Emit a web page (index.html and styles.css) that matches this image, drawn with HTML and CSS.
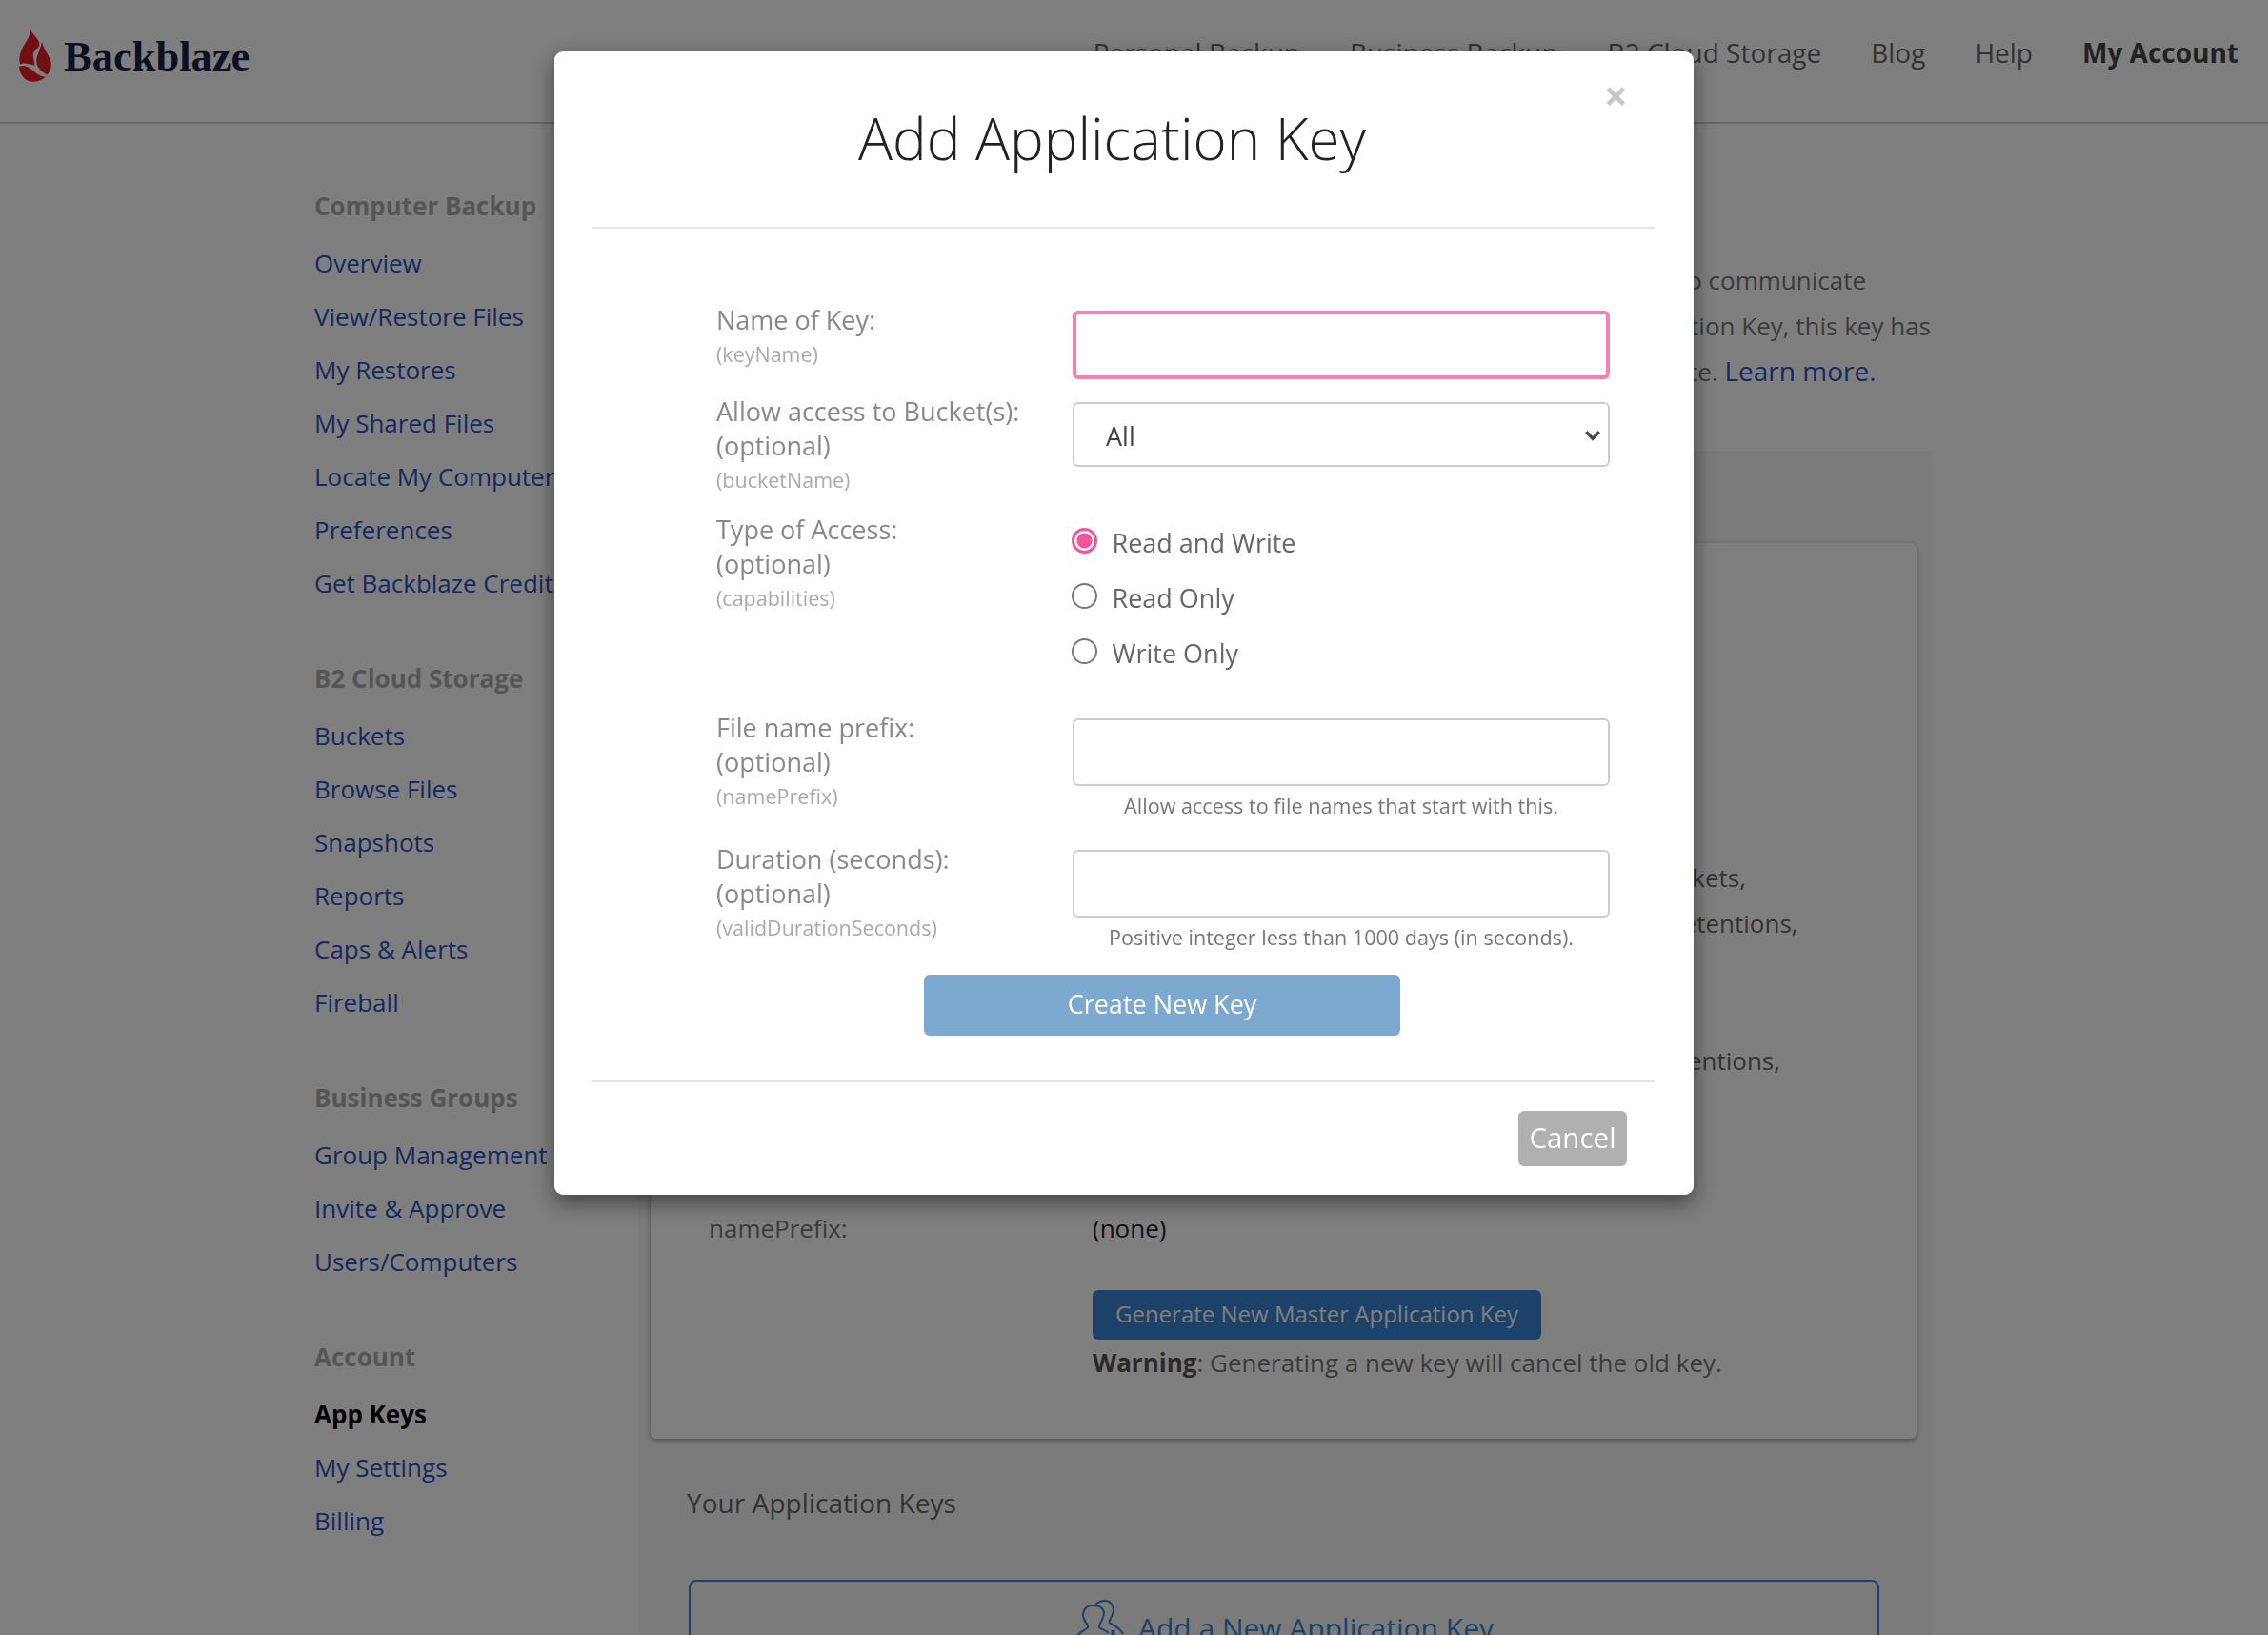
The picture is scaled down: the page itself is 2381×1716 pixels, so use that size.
FILE: index.html
```html
<!DOCTYPE html>
<html lang="en">
<head>
<meta charset="utf-8">
<title>App Keys</title>
<link rel="stylesheet" href="styles.css">
</head>
<body>
<header class="topbar">
  <a class="logo" href="#">
    <svg class="flame" viewBox="0 0 102 173" aria-hidden="true">
      <path d="M35 3C38 22 60 32 64 52C66 66 50 70 45 84C42 96 50 108 49 122C34 116 16 112 3 117C-3 96 6 72 18 54C27 40 37 24 35 3Z"/>
      <path d="M72 45C74 66 92 84 100 108C104 126 98 142 88 151C74 143 58 132 55 112C53 92 68 72 72 45Z"/>
      <path d="M0 124C14 119 30 126 42 136C52 146 66 156 84 158C72 168 58 173 44 173C20 173 2 152 0 124Z"/>
    </svg>
    <span class="logo-text">Backblaze</span>
  </a>
  <nav class="topnav">
    <a href="#">Personal Backup</a>
    <a href="#">Business Backup</a>
    <a href="#">B2 Cloud Storage</a>
    <a href="#">Blog</a>
    <a href="#">Help</a>
    <a href="#" class="strong">My Account</a>
  </nav>
</header>

<div class="layout">
  <aside class="sidebar">
    <section class="side-group">
      <h3>Computer Backup</h3>
      <a href="#">Overview</a>
      <a href="#">View/Restore Files</a>
      <a href="#">My Restores</a>
      <a href="#">My Shared Files</a>
      <a href="#">Locate My Computer</a>
      <a href="#">Preferences</a>
      <a href="#">Get Backblaze Credits</a>
    </section>
    <section class="side-group">
      <h3>B2 Cloud Storage</h3>
      <a href="#">Buckets</a>
      <a href="#">Browse Files</a>
      <a href="#">Snapshots</a>
      <a href="#">Reports</a>
      <a href="#">Caps &amp; Alerts</a>
      <a href="#">Fireball</a>
    </section>
    <section class="side-group">
      <h3>Business Groups</h3>
      <a href="#">Group Management</a>
      <a href="#">Invite &amp; Approve</a>
      <a href="#">Users/Computers</a>
    </section>
    <section class="side-group">
      <h3>Account</h3>
      <a href="#" class="current">App Keys</a>
      <a href="#">My Settings</a>
      <a href="#">Billing</a>
    </section>
  </aside>

  <main class="content">
    <p class="intro">
      <span class="intro-a">Application Keys are used by software to communicate</span>
      <span class="intro-b">with B2. When you create a Master Application Key, this key has</span>
      <span class="intro-c">full access to the account, so keep it private. <a href="#">Learn more.</a></span>
    </p>
    <div class="panel">
      <div class="card">
        <div class="card-rows">
          <div class="kv">
            <span class="k">capabilities:</span>
            <div class="v caps">
              <span class="cap-a">listKeys, writeKeys, deleteKeys, listBuckets,</span>
              <span class="cap-b">writeBuckets, deleteBuckets, readBucketRetentions,</span>
              <span class="cap-c">listFiles, readFiles,</span>
              <span class="cap-d">shareFiles, writeFiles,</span>
              <span class="cap-e">writeFileLegalHolds, readFileRetentions,</span>
            </div>
          </div>
          <div class="kv prefix">
            <span class="k">namePrefix:</span>
            <span class="v">(none)</span>
          </div>
          <div class="kv action">
            <span class="k"></span>
            <div class="v">
              <a class="btn-generate" href="#">Generate New Master Application Key</a>
              <p class="warning"><strong>Warning</strong>: Generating a new key will cancel the old key.</p>
            </div>
          </div>
        </div>
      </div>
      <h2 class="keys-title">Your Application Keys</h2>
      <a class="add-key" href="#">
        <svg class="add-icon" viewBox="0 0 60 60" aria-hidden="true">
          <path d="M22 5C25 2 28 1 32 1C37 1 41 5 41 11C41 15 38 18 38 20C36 23 36 24 38 25C42 27 48 30 51 36"/>
          <path d="M1 40C4 34 12 32 14 29C15 27 11 24 10 20C8 16 9 14 10 12C11 8 15 6 20 6C26 6 30 9 31 13C31 17 30 19 29 21C28 24 25 26 26 29C28 31 33 32 36 35"/>
          <rect class="add-mark" x="38.5" y="32" width="4" height="12"/>
        </svg>
        <span>Add a New Application Key</span>
      </a>
    </div>
  </main>
</div>

<div class="backdrop">
  <div class="modal" role="dialog" aria-labelledby="modal-title">
    <header class="modal-head">
      <h1 id="modal-title">Add Application Key</h1>
      <button class="close" type="button" aria-label="Close">×</button>
    </header>
    <form class="modal-body">
      <div class="row">
        <label class="lab" for="keyName">Name of Key:<small>(keyName)</small></label>
        <div class="field"><input id="keyName" class="text focus" type="text"></div>
      </div>
      <div class="row row-b">
        <label class="lab" for="bucket">Allow access to Bucket(s):<br>(optional)<small>(bucketName)</small></label>
        <div class="field">
          <div class="select-wrap">
            <select id="bucket"><option>All</option></select>
            <svg class="chevron" viewBox="0 0 16 12" aria-hidden="true"><path d="M2 2.5L8 9L14 2.5"/></svg>
          </div>
        </div>
      </div>
      <div class="row row-c">
        <div class="lab">Type of Access:<br>(optional)<small>(capabilities)</small></div>
        <div class="radios">
          <label><input type="radio" name="access" checked><span>Read and Write</span></label>
          <label><input type="radio" name="access"><span>Read Only</span></label>
          <label><input type="radio" name="access"><span>Write Only</span></label>
        </div>
      </div>
      <div class="row row-d">
        <label class="lab" for="prefix">File name prefix:<br>(optional)<small>(namePrefix)</small></label>
        <div class="field">
          <input id="prefix" class="text" type="text">
          <p class="hint">Allow access to file names that start with this.</p>
        </div>
      </div>
      <div class="row">
        <label class="lab" for="duration">Duration (seconds):<br>(optional)<small>(validDurationSeconds)</small></label>
        <div class="field">
          <input id="duration" class="text" type="text">
          <p class="hint">Positive integer less than 1000 days (in seconds).</p>
        </div>
      </div>
      <button class="btn-create" type="button">Create New Key</button>
    </form>
    <footer class="modal-foot">
      <button class="btn-cancel" type="button">Cancel</button>
    </footer>
  </div>
</div>
</body>
</html>
```
FILE: styles.css
```css
* { box-sizing: border-box; }
html, body { height: 100%; margin: 0; overflow: hidden; }
body { background: #fff; font-family: "Open Sans", "Noto Sans", sans-serif; font-size: 26px; color: #555; }
a { text-decoration: none; }

/* top bar */
.topbar { height: 130px; border-bottom: 2px solid #ccc; display: flex; justify-content: space-between; padding: 0 31px 0 20px; }
.logo { display: flex; align-items: flex-start; padding-top: 28px; gap: 13px; }
.flame { width: 34px; height: 58px; fill: #e21e29; }
.logo-text { font-family: "Liberation Serif", serif; font-weight: 700; font-size: 44.5px; line-height: 62px; color: #1a1e44; }
.topnav { display: flex; gap: 52px; padding-top: 31.5px; font-size: 28px; line-height: 46px; }
.topnav a { color: #666; }
.topnav a.strong { color: #444; font-weight: 700; }

/* page layout */
.layout { display: flex; padding-left: 330px; }
.sidebar { width: 340px; padding-top: 54px; flex: none; }
.side-group { margin-bottom: 40px; }
.side-group h3 { margin: 0; font-size: 26px; line-height: 64px; font-weight: 700; color: #aaa; }
.side-group a { display: block; line-height: 56px; color: #2f50c0; white-space: nowrap; }
.side-group a.current { color: #000; font-weight: 700; }

.content { width: 1357px; flex: none; }
.intro { margin: 140px 0 59px; line-height: 48px; text-align: right; color: #777; white-space: nowrap; }
.intro span { display: block; }
.intro-a { padding-right: 68px; }
.intro-c { padding-right: 57.5px; margin-top: -1px; margin-bottom: 1px; }
.intro a { color: #2f50c0; font-size: 28px; }

.panel { background: #f6f6f6; padding: 97px 15px 0 13px; height: 1300px; }
.card { background: #fff; height: 940px; border-radius: 6px; box-shadow: 0 2px 5px rgba(0,0,0,.35); padding: 326.5px 60px 0 61px; }
.kv { display: flex; }
.k { width: 403px; flex: none; color: #777; line-height: 48px; }
.v { line-height: 48px; color: #222; }
.caps { width: 742px; text-align: right; color: #666; white-space: nowrap; }
.caps span { display: block; }
.cap-a { padding-right: 56px; }
.cap-b { padding-right: 1.5px; }
.cap-c, .cap-d { padding-right: 400px; }
.cap-e { padding-right: 20px; }
.prefix { margin-top: 128px; }
.action { margin-top: 41.5px; }
.btn-generate { display: block; width: 471px; height: 52px; line-height: 49px; text-align: center; border-radius: 6px; background: #3b84d4; color: #fff; font-size: 24px; white-space: nowrap; }
.warning { margin: 0; line-height: 48px; color: #777; }
.warning strong { color: #555; }
.keys-title { margin: 44.5px 0 0 38px; font-weight: 400; font-size: 28.1px; line-height: 44px; color: #666; }
.add-key { margin: 59px 0 0 40px; width: 1250px; height: 200px; border: 2px solid #3b84d4; border-radius: 8px; display: flex; justify-content: center; gap: 7px; padding-top: 19px; font-size: 30px; line-height: 60px; color: #3b84d4; }
.add-icon { width: 60px; height: 60px; flex: none; fill: none; stroke: #3b84d4; stroke-width: 2; }
.add-mark { fill: #3b84d4; stroke: none; }

/* modal */
.backdrop { position: fixed; inset: 0; background: rgba(0,0,0,.5); }
.modal { position: relative; width: 1196px; height: 1200px; margin: 54px 0 0 582px; background: #fff; border-radius: 9px; box-shadow: 0 8px 23px rgba(0,0,0,.5); padding: 0 41px 0 39px; }
.modal-head { height: 186px; border-bottom: 2px solid #e5e5e5; text-align: center; padding: 48.5px 23px 0 0; }
.modal-head h1 { margin: 0; font-size: 60px; font-weight: 300; line-height: 84px; color: #222; }
.close { position: absolute; top: 24px; right: 69px; padding: 0; border: 0; background: none; font-family: "Open Sans", sans-serif; font-size: 44px; font-weight: 700; line-height: 44px; color: #c8c8c8; }

.modal-body { padding: 79px 40px 0 131px; height: 894px; }
.row { display: grid; grid-template-columns: 374px 564px; margin-bottom: 16px; }
.row:first-child { margin-bottom: 17px; }
.row-b { margin-bottom: 17.5px; }
.lab { line-height: 36px; color: #888; font-size: 27px; margin-top: -1.5px; }
.lab small { display: block; font-size: 21.5px; color: #aaa; }
.field { padding-top: 7px; }
.text { display: block; width: 100%; height: 71px; border: 2px solid #ccc; border-radius: 6px; background: #fff; }
.text.focus { height: 72px; border: 4px solid #f77fb5; outline: 0; }
.select-wrap { position: relative; }
.select-wrap select { display: block; width: 100%; height: 68px; appearance: none; background: #fff; border: 2px solid #ccc; border-radius: 6px; padding: 2px 33px 0; font-family: "Open Sans", sans-serif; font-size: 27px; color: #444; }
.chevron { position: absolute; right: 9px; top: 28px; width: 18px; height: 14px; fill: none; stroke: #444; stroke-width: 3; }
.radios { display: flex; flex-direction: column; padding: 3px 0 15px; }
.radios label { display: flex; align-items: center; height: 58px; color: #666; font-size: 27px; }
.radios span { padding-bottom: 3px; }
.radios input { appearance: none; flex: none; margin: -8px 15.5px 0 -1px; width: 27px; height: 27px; border: 2px solid #767676; border-radius: 50%; background: #fff; }
.radios input:checked { border: 3px solid #f0559f; background: radial-gradient(circle, #f0559f 0 7.5px, #fff 8.5px); }
.hint { margin: 3px 0 5px; font-size: 21.6px; line-height: 36px; text-align: center; color: #777; }
.btn-create { display: block; width: 500px; height: 64px; margin: 15px 0 0 218px; padding: 0 0 3px; border: 0; border-radius: 6px; background: #7da8d0; color: #fff; font-family: "Open Sans", sans-serif; font-size: 27px; }

.modal-foot { border-top: 2px solid #e5e5e5; padding: 30px 29px 0 0; display: flex; justify-content: flex-end; }
.btn-cancel { width: 114px; height: 58px; border: 0; border-radius: 6px; background: #b0b0b0; color: #fff; padding: 0 0 3px; font-family: "Open Sans", sans-serif; font-size: 29.5px; }
```
